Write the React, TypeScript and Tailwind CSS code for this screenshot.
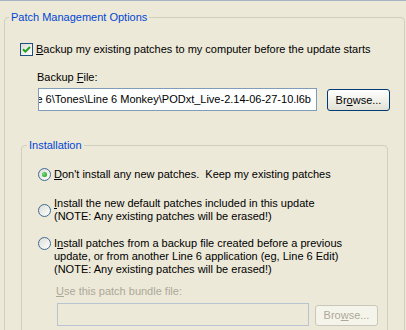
import React from "react";

function CheckBox({ checked }: { checked: boolean }) {
  return (
    <span className="flex h-[13px] w-[13px] shrink-0 items-center justify-center border border-[#1c5180] bg-gradient-to-br from-[#dcdcd4] to-white">
      {checked && (
        <svg width="11" height="11" viewBox="0 0 11 11">
          <path d="M2 5.2 L4.4 7.6 L9 3" fill="none" stroke="#21a121" strokeWidth="2" />
        </svg>
      )}
    </span>
  );
}

function Radio({ checked }: { checked: boolean }) {
  return (
    <svg width="13" height="13" viewBox="0 0 13 13" className="shrink-0">
      <defs>
        <linearGradient id="rf" x1="0" y1="0" x2="1" y2="1">
          <stop offset="0" stopColor="#dcdcd4" />
          <stop offset="1" stopColor="#ffffff" />
        </linearGradient>
        <radialGradient id="rd" cx="0.4" cy="0.4" r="0.7">
          <stop offset="0" stopColor="#7ee07e" />
          <stop offset="1" stopColor="#1c9a1c" />
        </radialGradient>
      </defs>
      <circle cx="6.5" cy="6.5" r="6" fill="url(#rf)" stroke="#3f6a93" strokeWidth="1" />
      {checked && <circle cx="6.5" cy="6.5" r="2.5" fill="url(#rd)" />}
    </svg>
  );
}

function Browse({ disabled, hot }: { disabled?: boolean; hot: string }) {
  const [a, b] = ["Browse...".slice(0, "Browse...".indexOf(hot)), "Browse...".slice("Browse...".indexOf(hot) + 1)];
  return (
    <button
      className={
        disabled
          ? "flex h-[21px] w-[63px] items-center justify-center rounded-[3px] border border-[#c9c7ba] bg-[#f5f4ea] text-[#aca899]"
          : "flex h-[22px] w-[63px] items-center justify-center rounded-[3px] border border-[#003c74] bg-gradient-to-b from-white to-[#e3e1d5] text-black"
      }
    >
      {a}
      <span className="underline">{hot}</span>
      {b}
    </button>
  );
}

export default function App() {
  return (
    <div className="h-[330px] w-[406px] overflow-hidden border-t border-[#a9b3c2] bg-[#ece9d8] font-['Liberation_Sans',sans-serif] text-[11px] leading-[13px] text-black">
      <fieldset className="ml-[4px] mr-[1px] mt-[10px] rounded-[4px] border border-[#d0d0bf] pb-[40px] pl-[4px]">
        <legend className="px-[2px] text-[#0046d5]">Patch Management Options</legend>

        {/* backup checkbox */}
        <label className="ml-[11px] mt-[19px] flex items-center gap-[3px]">
          <CheckBox checked />
          <span>
            <span className="underline">B</span>ackup my existing patches to my computer before the update starts
          </span>
        </label>

        <div className="ml-[28px] mt-[15px]">
          Backup <span className="underline">F</span>ile:
        </div>

        <div className="ml-[29px] mt-[4px] flex items-start gap-[10px]">
          <div className="flex h-[23px] w-[279px] items-center justify-end overflow-hidden whitespace-nowrap border border-[#7f9db9] bg-white pr-[5px]">
            C:\Program Files\Line 6\Tones\Line 6 Monkey\PODxt_Live-2.14-06-27-10.l6b
          </div>
          <div className="mt-[1px]">
            <Browse hot="o" />
          </div>
        </div>

        {/* installation group */}
        <fieldset className="ml-[12px] mt-[28px] w-[367px] rounded-[4px] border border-[#d0d0bf] pb-[20px] pl-[5px]">
          <legend className="px-[2px] text-[#0046d5]">Installation</legend>

          <label className="ml-[11px] mt-[16px] flex items-start gap-[3px]">
            <Radio checked />
            <span>
              <span className="underline">D</span>on't install any new patches.&nbsp; Keep my existing patches
            </span>
          </label>

          <label className="ml-[11px] mt-[16px] flex items-center gap-[3px]">
            <Radio checked={false} />
            <span>
              <span className="underline">I</span>nstall the new default patches included in this update
              <br />
              (NOTE: Any existing patches will be erased!)
            </span>
          </label>

          <label className="ml-[11px] mt-[14px] flex items-start gap-[3px]">
            <Radio checked={false} />
            <span>
              I<span className="underline">n</span>stall patches from a backup file created before a previous
              <br />
              update, or from another Line 6 application (eg, Line 6 Edit)
              <br />
              (NOTE: Any existing patches will be erased!)
            </span>
          </label>

          <div className="ml-[29px] mt-[9px] text-[#aca899]">
            <span className="underline">U</span>se this patch bundle file:
          </div>

          <div className="ml-[30px] mt-[5px] flex items-start gap-[6px]">
            <div className="h-[23px] w-[252px] border border-[#b9c4d0] bg-[#ece9d8]" />
            <div className="mt-[2px]">
              <Browse disabled hot="w" />
            </div>
          </div>
        </fieldset>
      </fieldset>
    </div>
  );
}
